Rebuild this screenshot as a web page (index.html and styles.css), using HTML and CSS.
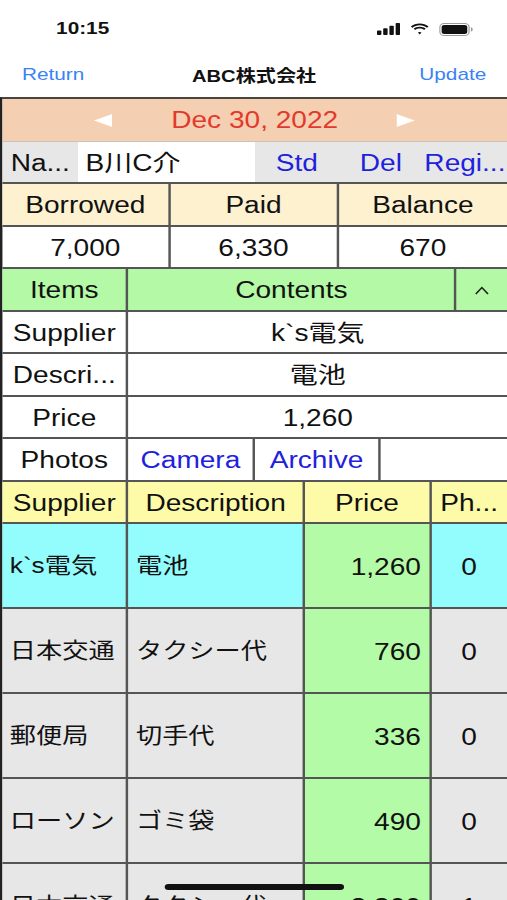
FILE: index.html
```html
<!DOCTYPE html>
<html lang="ja">
<head>
<meta charset="utf-8">
<title>ABC株式会社</title>
<link rel="stylesheet" href="styles.css">
</head>
<body>
<div class="app">
  <div class="status">
    <span class="time">10:15</span>
    <div class="status-icons">
      <svg width="19" height="12" viewBox="0 0 19 12"><rect x="0" y="7.5" width="3.6" height="4.5" rx="0.8" fill="#111"/><rect x="5.1" y="5.2" width="3.6" height="6.8" rx="0.8" fill="#111"/><rect x="10.2" y="2.7" width="3.6" height="9.3" rx="0.8" fill="#111"/><rect x="15.3" y="0" width="3.6" height="12" rx="0.8" fill="#111"/></svg>
      <svg width="16" height="12" viewBox="0 0 16 12"><path d="M8 2.3c2.3 0 4.4.9 6 2.4l1.3-1.3C13.3 1.5 10.8.4 8 .4S2.7 1.5.7 3.4L2 4.7c1.6-1.5 3.7-2.4 6-2.4z" fill="#111"/><path d="M8 5.6c1.4 0 2.6.5 3.6 1.4l1.3-1.3C11.6 4.5 9.9 3.8 8 3.8s-3.6.7-4.9 1.9L4.4 7C5.4 6.1 6.6 5.6 8 5.6z" fill="#111"/><path d="M8 8.9c.6 0 1.1.2 1.5.6L8 11.5 6.5 9.5c.4-.4.9-.6 1.5-.6z" fill="#111"/></svg>
      <svg width="28" height="13" viewBox="0 0 28 13"><rect x="0.5" y="0.5" width="24" height="12" rx="3.6" fill="none" stroke="#9a9a9a" stroke-width="1"/><rect x="2" y="2" width="21" height="9" rx="2.2" fill="#111"/><path d="M26 4.3c.9.3 1.5 1.2 1.5 2.2s-.6 1.9-1.5 2.2z" fill="#9a9a9a"/></svg>
    </div>
  </div>

  <div class="nav">
    <span class="nav-btn">Return</span>
    <span class="nav-title">ABC株式会社</span>
    <span class="nav-btn nav-right">Update</span>
  </div>

  <div class="sheet">
    <div class="row date">
      <span></span>
      <span class="cell-plain"><svg width="15" height="13" viewBox="0 0 15 13"><polygon points="0,6.5 15,0 15,13" fill="#fff"/></svg></span>
      <span class="cell-plain date-text">Dec 30, 2022</span>
      <span class="cell-plain"><svg width="15" height="13" viewBox="0 0 15 13"><polygon points="15,6.5 0,0 0,13" fill="#fff"/></svg></span>
      <span></span>
    </div>

    <div class="row name">
      <span class="cell-plain">Na...</span>
      <span class="cell-plain name-input">B川C介</span>
      <span class="cell-plain link">Std</span>
      <span class="cell-plain link">Del</span>
      <span class="cell-plain link">Regi...</span>
    </div>

    <div class="row thirds cream">
      <span class="cell">Borrowed</span>
      <span class="cell">Paid</span>
      <span class="cell">Balance</span>
    </div>
    <div class="row thirds">
      <span class="cell">7,000</span>
      <span class="cell">6,330</span>
      <span class="cell">670</span>
    </div>

    <div class="row detail-head green">
      <span class="cell">Items</span>
      <span class="cell">Contents</span>
      <span class="cell"><svg width="12" height="9" viewBox="0 0 12 9"><polyline points="1,8 6,1.5 11,8" fill="none" stroke="#222" stroke-width="1.3"/></svg></span>
    </div>
    <div class="row detail">
      <span class="cell">Supplier</span>
      <span class="cell">k`s電気</span>
    </div>
    <div class="row detail">
      <span class="cell">Descri...</span>
      <span class="cell">電池</span>
    </div>
    <div class="row detail">
      <span class="cell">Price</span>
      <span class="cell">1,260</span>
    </div>
    <div class="row quarters">
      <span class="cell">Photos</span>
      <span class="cell link">Camera</span>
      <span class="cell link">Archive</span>
      <span class="cell"></span>
    </div>

    <div class="row list yellow">
      <span class="cell">Supplier</span>
      <span class="cell">Description</span>
      <span class="cell">Price</span>
      <span class="cell">Ph...</span>
    </div>

    <div class="row list item selected">
      <span class="cell text">k`s電気</span>
      <span class="cell text">電池</span>
      <span class="cell price">1,260</span>
      <span class="cell">0</span>
    </div>
    <div class="row list item">
      <span class="cell text">日本交通</span>
      <span class="cell text">タクシー代</span>
      <span class="cell price">760</span>
      <span class="cell">0</span>
    </div>
    <div class="row list item">
      <span class="cell text">郵便局</span>
      <span class="cell text">切手代</span>
      <span class="cell price">336</span>
      <span class="cell">0</span>
    </div>
    <div class="row list item">
      <span class="cell text">ローソン</span>
      <span class="cell text">ゴミ袋</span>
      <span class="cell price">490</span>
      <span class="cell">0</span>
    </div>
    <div class="row list item">
      <span class="cell text">日本交通</span>
      <span class="cell text">タクシー代</span>
      <span class="cell price">3,300</span>
      <span class="cell">1</span>
    </div>
  </div>

  <div class="home-indicator"></div>
</div>
</body>
</html>
```

FILE: styles.css
```css
* {
  box-sizing: border-box;
  margin: 0;
  padding: 0;
}

html,
body {
  width: 507px;
  height: 900px;
  overflow: hidden;
  background: #fff;
}

body {
  font-family: "Liberation Sans", "Noto Sans CJK JP", sans-serif;
  color: #111;
}

/* The reference is horizontally stretched; lay out at natural width and stretch. */
.app {
  position: relative;
  width: 415.57px;
  height: 900px;
  overflow: hidden;
  transform: scaleX(1.22);
  transform-origin: 0 0;
}

.status {
  height: 52px;
  padding: 6px 28px 0 46px;
  display: flex;
  align-items: center;
  justify-content: space-between;
}

.time {
  font-size: 17px;
  font-weight: 700;
  line-height: 20px;
}

.status-icons {
  display: flex;
  align-items: center;
  gap: 8px;
}

.nav {
  height: 45px;
  padding: 0 17px 0 18px;
  display: grid;
  grid-template-columns: 1fr auto 1fr;
  align-items: center;
}

.nav-btn {
  font-size: 17px;
  color: #3a82f6;
}

.nav-right {
  justify-self: end;
}

.nav-title {
  font-size: 16.5px;
  font-weight: 700;
}

.sheet {
  border-top: 2px solid #4a4440;
  border-left: 2px solid #222;
}

.row {
  display: grid;
  height: 42.5px;
  border-bottom: 2px solid #555;
  font-size: 23px;
  line-height: 1;
}

.cell,
.cell-plain {
  display: flex;
  align-items: center;
  justify-content: center;
  padding-top: 3px;
  white-space: nowrap;
  overflow: hidden;
}

.cell {
  border-right: 2px solid #555;
}

.cell:last-child {
  border-right: none;
}

.date {
  grid-template-columns: 10% 20% 40% 20% 10%;
  background: #f4cfb2;
  border-bottom: 1px solid #cdc3bb;
}

.date .cell-plain {
  padding-top: 1px;
}

.date-text {
  color: #e3392c;
}

.name {
  grid-template-columns: 15% 35% 1fr 1fr 1fr;
  background: #e7e7e7;
}

.name-input {
  background: #fff;
  justify-content: flex-start;
  padding-left: 6px;
}

.link {
  color: #1f22dd;
}

.thirds {
  grid-template-columns: 1fr 1fr 1fr;
}

.cream {
  background: #fdf1cf;
}

.green {
  background: #b4f9a5;
}

.yellow {
  background: #fdfba8;
}

.detail-head {
  grid-template-columns: 25% 65% 10%;
}

.detail {
  grid-template-columns: 25% 75%;
}

.quarters {
  grid-template-columns: 25% 25% 25% 25%;
}

.list {
  grid-template-columns: 25% 35% 25% 15%;
}

.item {
  height: 85px;
  background: #e7e7e7;
}

.item.selected {
  background: #93fcfd;
}

.text {
  justify-content: flex-start;
  padding-left: 6px;
  font-size: 21.5px;
}

.price {
  justify-content: flex-end;
  padding-right: 6.5px;
  background: #b3fba6;
}

.home-indicator {
  position: absolute;
  left: 135px;
  top: 884px;
  width: 147px;
  height: 6px;
  border-radius: 3px;
  background: #111;
}
```
